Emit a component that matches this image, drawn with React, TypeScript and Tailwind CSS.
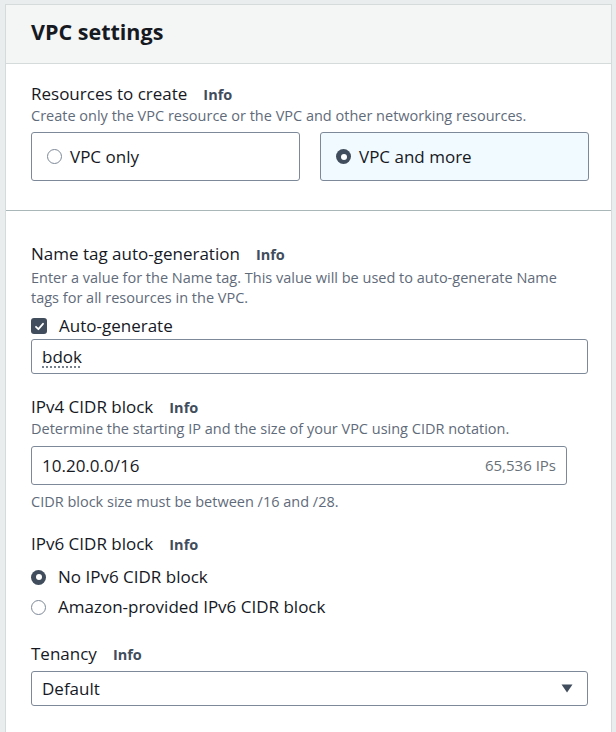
import React from "react";

function Info() {
  return (
    <span className="ml-[16px] text-[14.5px] font-bold text-[#414d5c]">Info</span>
  );
}

function Label({ children }: { children: React.ReactNode }) {
  return (
    <div className="flex items-baseline text-[17px] leading-[22px] text-[#16191f]">
      <span>{children}</span>
      <Info />
    </div>
  );
}

function Desc({ children, className = "" }: { children: React.ReactNode; className?: string }) {
  return (
    <p className={`text-[14.5px] leading-[20px] text-[#5f6b7a] ${className}`}>{children}</p>
  );
}

function Radio({ checked }: { checked?: boolean }) {
  return checked ? (
    <span className="flex h-[15px] w-[15px] shrink-0 items-center justify-center rounded-full bg-[#414d5c]">
      <span className="h-[6px] w-[6px] rounded-full bg-white" />
    </span>
  ) : (
    <span className="h-[15px] w-[15px] shrink-0 rounded-full border-[1.5px] border-[#7d8998] bg-white" />
  );
}

export default function App() {
  return (
    <div
      className="min-h-screen bg-[#eaeded] pl-[5px] pr-[4px] pt-[4px] text-[#16191f]"
      style={{ fontFamily: '"Open Sans", "Noto Sans", sans-serif' }}
    >
      <div className="border border-[#d5dbdb] bg-white">
        <div className="flex h-[59px] items-center border-b border-[#d5dbdb] bg-[#f4f5f5] pb-[3px] pl-[25px]">
          <h2 className="text-[21.5px] font-bold">VPC settings</h2>
        </div>

        <section className="pb-[29px] pl-[25px] pr-[22px] pt-[19px]">
          <Label>Resources to create</Label>
          <Desc>Create only the VPC resource or the VPC and other networking resources.</Desc>
          <div className="mt-[6px] grid grid-cols-2 gap-[20px]">
            <div className="flex h-[49px] items-center gap-[8px] rounded-[3px] border border-[#7d8998] px-[15px] text-[17px]">
              <Radio />
              <span>VPC only</span>
            </div>
            <div className="flex h-[49px] items-center gap-[8px] rounded-[3px] border border-[#7d8998] bg-[#f1faff] px-[15px] text-[17px]">
              <Radio checked />
              <span>VPC and more</span>
            </div>
          </div>
        </section>

        <div className="border-t border-[#aab7b8]" />

        <section className="pb-[30px] pl-[25px] pr-[23px] pt-[32px]">
          <Label>Name tag auto-generation</Label>
          <Desc className="mt-[2px] max-w-[540px]">
            Enter a value for the Name tag. This value will be used to auto-generate Name tags for all resources in
            the VPC.
          </Desc>
          <div className="mt-[7px] flex items-center gap-[12px] text-[17px] leading-[22px]">
            <span className="flex h-[16px] w-[16px] items-center justify-center rounded-[3px] bg-[#414d5c]">
              <svg width="11" height="11" viewBox="0 0 11 11" fill="none">
                <path d="M2 5.8 L4.4 8.2 L9 2.8" stroke="white" strokeWidth="1.8" strokeLinecap="round" strokeLinejoin="round" />
              </svg>
            </span>
            <span>Auto-generate</span>
          </div>
          <div className="mt-[2px] flex h-[35px] items-center rounded-[3px] border border-[#7d8998] px-[10px] text-[17px]">
            <span className="underline decoration-[#5f6b7a] decoration-dotted underline-offset-[4px]">bdok</span>
          </div>

          <div className="mt-[22px]">
            <Label>IPv4 CIDR block</Label>
          </div>
          <Desc>Determine the starting IP and the size of your VPC using CIDR notation.</Desc>
          <div className="mt-[7px] flex h-[39px] w-[536px] items-center justify-between rounded-[3px] border border-[#7d8998] px-[10px]">
            <span className="text-[17px]">10.20.0.0/16</span>
            <span className="text-[15px] text-[#687078]">65,536 IPs</span>
          </div>
          <Desc className="mt-[7px]">CIDR block size must be between /16 and /28.</Desc>

          <div className="mt-[21px]">
            <Label>IPv6 CIDR block</Label>
          </div>
          <div className="mt-[10px] flex items-center gap-[12px] text-[17px] leading-[22px]">
            <Radio checked />
            <span>No IPv6 CIDR block</span>
          </div>
          <div className="mt-[8px] flex items-center gap-[12px] text-[17px] leading-[22px]">
            <Radio />
            <span>Amazon-provided IPv6 CIDR block</span>
          </div>

          <div className="mt-[25px]">
            <Label>Tenancy</Label>
          </div>
          <div className="mt-[5px] flex h-[35px] items-center justify-between rounded-[3px] border border-[#7d8998] pl-[10px] pr-[14px] text-[17px]">
            <span>Default</span>
            <svg width="12" height="9" viewBox="0 0 12 9">
              <path d="M0.5 0.5 H11.5 L6 8.5 Z" fill="#414d5c" />
            </svg>
          </div>
        </section>
      </div>
    </div>
  );
}
